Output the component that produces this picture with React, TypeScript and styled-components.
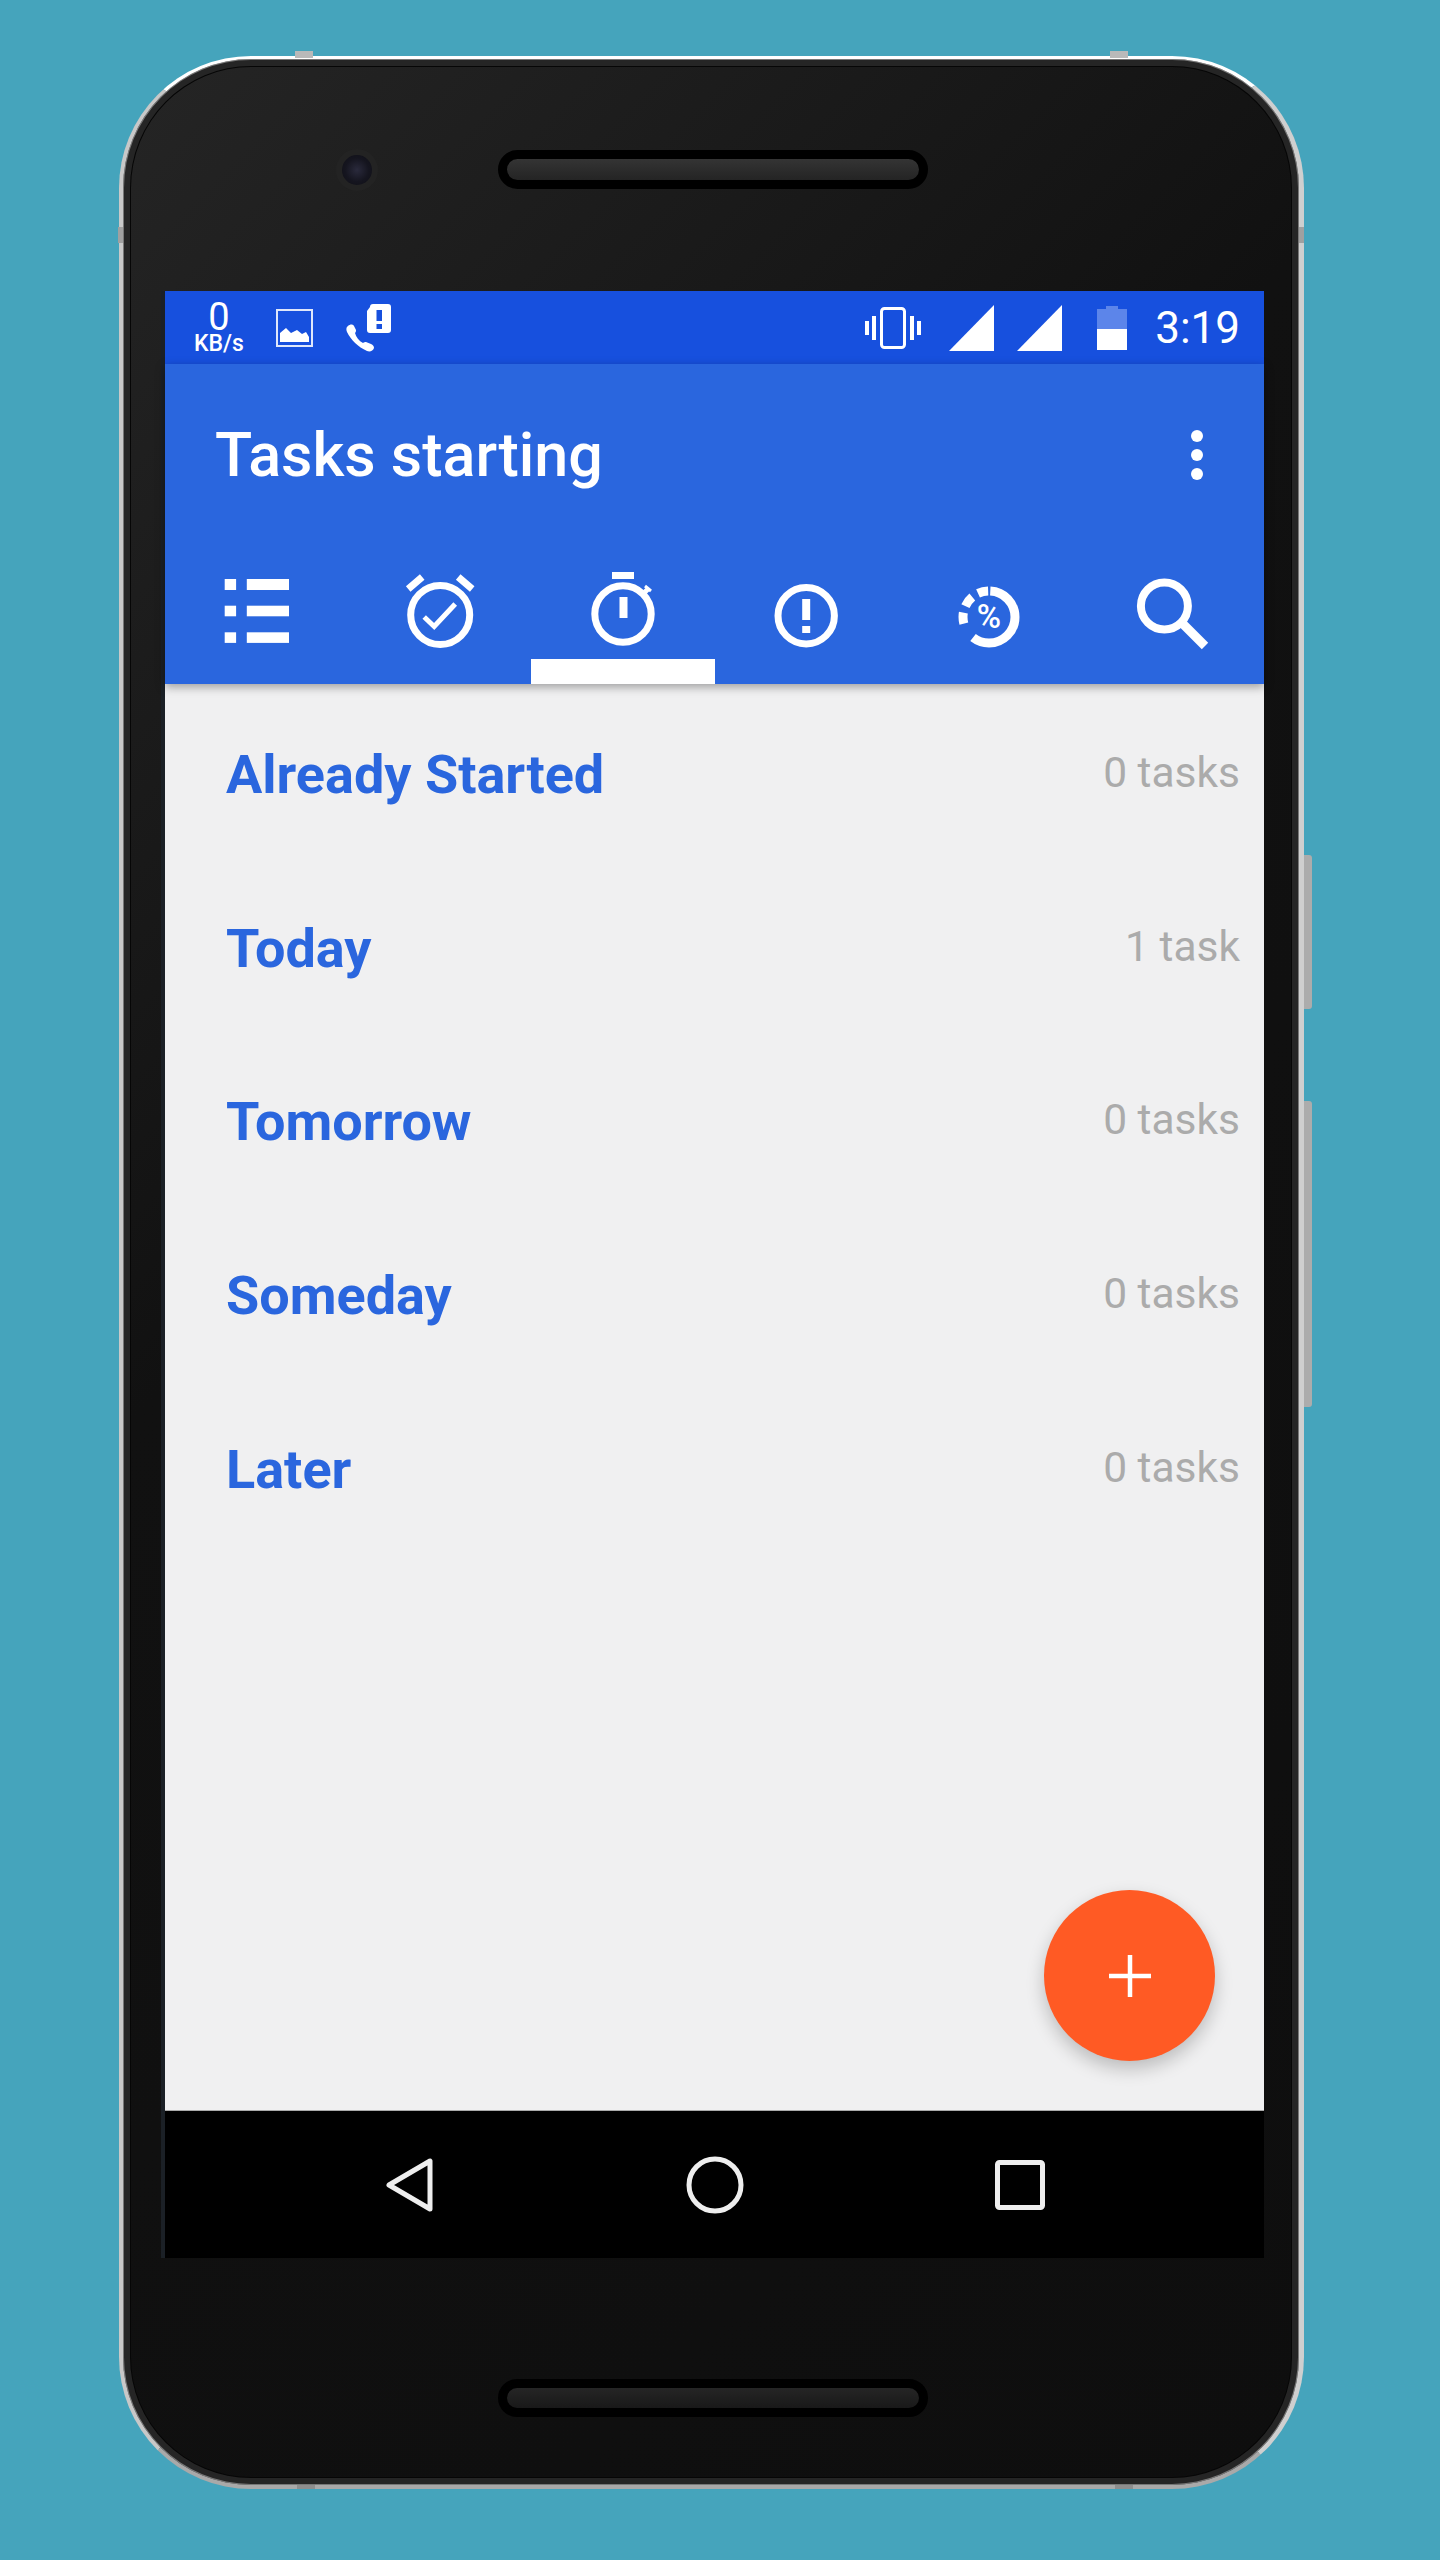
import styled, { createGlobalStyle } from "styled-components";

const GlobalStyle = createGlobalStyle`
  html, body {
    margin: 0;
    padding: 0;
    background: #45a4bc;
  }
  * {
    box-sizing: border-box;
  }
`;

const rows = [
  { name: "Already Started", count: "0 tasks" },
  { name: "Today", count: "1 task" },
  { name: "Tomorrow", count: "0 tasks" },
  { name: "Someday", count: "0 tasks" },
  { name: "Later", count: "0 tasks" },
];

const ListIcon = () => (
  <TabSvg viewBox="0 0 100 100">
    <rect x="17.7" y="7" width="11.4" height="11" />
    <rect x="17.7" y="33.7" width="11.4" height="10.6" />
    <rect x="17.7" y="60.3" width="11.4" height="10.6" />
    <rect x="39.8" y="7" width="42.2" height="11" />
    <rect x="39.8" y="33.7" width="42.2" height="10.6" />
    <rect x="39.8" y="60.3" width="42.2" height="10.6" />
  </TabSvg>
);

const AlarmIcon = () => (
  <TabSvg viewBox="0 0 100 100">
    <g fill="none" stroke="#fff">
      <circle cx="50.2" cy="43" r="29.5" strokeWidth="7" />
      <path d="M18.2 17L32.2 5M68.2 5L82.2 17" strokeWidth="7" />
      <path d="M34.2 45L44.2 54.5L65.2 32" strokeWidth="5" />
    </g>
  </TabSvg>
);

const TimerIcon = () => (
  <TabSvg viewBox="0 0 100 100">
    <circle cx="50" cy="42" r="28.2" fill="none" stroke="#fff" strokeWidth="7" />
    <rect x="39" y="0" width="22" height="7" />
    <rect x="46.5" y="25" width="8" height="21" />
    <path d="M68 24L75 17" stroke="#fff" strokeWidth="5" />
    <path d="M72 14L78 19" stroke="#fff" strokeWidth="3" />
  </TabSvg>
);

const AlertIcon = () => (
  <TabSvg viewBox="0 0 100 100">
    <circle cx="50.2" cy="43.7" r="28.2" fill="none" stroke="#fff" strokeWidth="7" />
    <rect x="46.2" y="27" width="8" height="21" />
    <rect x="46.2" y="54" width="8" height="7" />
  </TabSvg>
);

const PercentIcon = () => (
  <TabSvg viewBox="0 0 100 100">
    <circle
      cx="50"
      cy="45"
      r="26"
      fill="none"
      stroke="#fff"
      strokeWidth="9"
      pathLength={360}
      strokeDasharray="215 37 25 15 25 15 23 5"
      strokeDashoffset="-3"
      transform="rotate(-90 50 45)"
    />
    <PercentText x="50" y="55.5" textAnchor="middle">
      %
    </PercentText>
  </TabSvg>
);

const SearchIcon = () => (
  <TabSvg viewBox="0 0 100 100">
    <circle cx="42.4" cy="34" r="23.5" fill="none" stroke="#fff" strokeWidth="8" />
    <path d="M60 51L83 74" fill="none" stroke="#fff" strokeWidth="9" />
  </TabSvg>
);

const tabs = [
  { key: "all", icon: <ListIcon /> },
  { key: "alarm", icon: <AlarmIcon /> },
  { key: "starting", icon: <TimerIcon />, active: true },
  { key: "due", icon: <AlertIcon /> },
  { key: "progress", icon: <PercentIcon /> },
  { key: "search", icon: <SearchIcon /> },
];

const App = () => {
  return (
    <Page>
      <GlobalStyle />
      <Phone>
        <Nub $side="top" $at={172} />
        <Nub $side="top" $at={987} />
        <Nub $side="bottom" $at={174} />
        <Nub $side="bottom" $at={992} />
        <EdgeNub $side="left" $top={168} />
        <EdgeNub $side="right" $top={168} />
        <SideKey $top={796} $height={154} />
        <SideKey $top={1042} $height={306} />

        <TopBezel>
          <Camera />
          <Speaker />
        </TopBezel>

        <Screen>
          <StatusBar>
            <StatusLeft>
              <NetSpeed>
                <NetValue>0</NetValue>
                <NetUnit>KB/s</NetUnit>
              </NetSpeed>
              <svg width="37" height="38" viewBox="0 0 37 38">
                <rect x="1" y="1" width="35" height="36" fill="none" stroke="#dfe7fb" strokeWidth="2" />
                <path d="M4 33V24L10 19L15 24L21 21L26 25L30 23L33 28V33Z" fill="#fff" />
              </svg>
              <svg width="45" height="48" viewBox="0 0 45 48">
                <path
                  d="M2 22C0 23 0 26 1 28C5 36 12 43 21 47C24 48 27 47 28 44C28 42 27 41 25 40L20 38C19 38 18 38 17 39C13 37 10 33 9 29C10 28 10 27 10 26L8 22C7 20 4 20 2 22Z"
                  fill="#fff"
                />
                <path d="M24 3Q24 0 27 0H42Q45 0 45 3V26Q45 29 42 29H24Q21 29 21 26V7Z" fill="#fff" />
                <rect x="30.5" y="6" width="5.5" height="11" fill="#1750de" />
                <rect x="30.5" y="20" width="5.5" height="5" fill="#1750de" />
              </svg>
            </StatusLeft>
            <StatusRight>
              <svg width="56" height="42" viewBox="0 0 56 42">
                <rect x="16.5" y="1.5" width="23" height="39" rx="3" fill="none" stroke="#fff" strokeWidth="3" />
                <path d="M2 14V28M9 9V33M47 9V33M54 14V28" stroke="#fff" strokeWidth="4" />
              </svg>
              <SignalIcon viewBox="0 0 45 46">
                <path d="M45 0V46H0Z" fill="#fff" />
              </SignalIcon>
              <SecondSignal viewBox="0 0 45 46">
                <path d="M45 0V46H0Z" fill="#fff" />
              </SecondSignal>
              <BatteryIcon viewBox="0 0 30 44">
                <path d="M9 0H21V3H30V23H0V3H9Z" fill="#5c85ea" />
                <rect x="0" y="23" width="30" height="21" fill="#fff" />
              </BatteryIcon>
              <Clock>3:19</Clock>
            </StatusRight>
          </StatusBar>

          <AppBar>
            <TitleRow>
              <Title>Tasks starting</Title>
              <svg width="14" height="52" viewBox="0 0 14 52">
                <circle cx="7" cy="7" r="6" fill="#fff" />
                <circle cx="7" cy="26" r="6" fill="#fff" />
                <circle cx="7" cy="45" r="6" fill="#fff" />
              </svg>
            </TitleRow>
            <TabRow>
              {tabs.map((tab) => (
                <Tab key={tab.key} $active={tab.active}>
                  {tab.icon}
                </Tab>
              ))}
            </TabRow>
          </AppBar>

          <Content>
            <GroupList>
              {rows.map((row) => (
                <GroupRow key={row.name}>
                  <GroupName>{row.name}</GroupName>
                  <GroupCount>{row.count}</GroupCount>
                </GroupRow>
              ))}
            </GroupList>
            <Fab>
              <svg width="42" height="42" viewBox="0 0 42 42">
                <path d="M21 0V42M0 21H42" stroke="#fff" strokeWidth="4.5" />
              </svg>
            </Fab>
          </Content>

          <NavBar>
            <NavButton>
              <svg width="60" height="66" viewBox="0 0 60 66">
                <path d="M50 9V57L9 33Z" fill="none" stroke="#eee" strokeWidth="5" strokeLinejoin="round" />
              </svg>
            </NavButton>
            <NavButton>
              <svg width="60" height="60" viewBox="0 0 60 60">
                <circle cx="30" cy="30" r="26" fill="none" stroke="#eee" strokeWidth="5" />
              </svg>
            </NavButton>
            <NavButton>
              <svg width="52" height="52" viewBox="0 0 52 52">
                <rect x="3.5" y="3.5" width="45" height="45" rx="2" fill="none" stroke="#eee" strokeWidth="5" />
              </svg>
            </NavButton>
          </NavBar>
        </Screen>

        <BottomBezel>
          <BottomSpeaker />
        </BottomBezel>
      </Phone>
    </Page>
  );
};

const Page = styled.div`
  width: 1440px;
  height: 2560px;
  padding: 56px 0 0 119px;
  overflow: hidden;
  background: #45a4bc;
  font-family: Roboto, "Liberation Sans", sans-serif;
`;

const Phone = styled.div`
  position: relative;
  display: flex;
  flex-direction: column;
  width: 1185px;
  height: 2433px;
  padding: 0 36px 0 42px;
  border-style: solid;
  border-width: 3px 5px 4px 4px;
  border-color: #fff #cfcfcf #a9a9a9 #c8c8c8;
  border-radius: 132px;
  background: linear-gradient(135deg, #252525 0%, #111 38%, #0e0e0e 100%);
  box-shadow: inset 0 0 0 1px #777, inset 0 0 0 7px #252525, inset 0 0 0 8px #060606;
`;

const Nub = styled.div<{ $side: "top" | "bottom"; $at: number }>`
  position: absolute;
  left: ${(p) => p.$at}px;
  ${(p) => (p.$side === "top" ? "top: -8px; height: 7px; background: #b9b9b9;" : "bottom: -4px; height: 4px; background: #8e8e8e;")}
  width: 18px;
`;

const EdgeNub = styled.div<{ $side: "left" | "right"; $top: number }>`
  position: absolute;
  top: ${(p) => p.$top}px;
  ${(p) => p.$side}: -5px;
  width: 5px;
  height: 16px;
  background: #a0a0a0;
`;

const SideKey = styled.div<{ $top: number; $height: number }>`
  position: absolute;
  top: ${(p) => p.$top}px;
  right: -13px;
  width: 8px;
  height: ${(p) => p.$height}px;
  border-radius: 0 3px 3px 0;
  background: #acacac;
`;

const TopBezel = styled.div`
  position: relative;
  display: flex;
  justify-content: center;
  flex-shrink: 0;
  height: 232px;
  padding: 91px 2px 0 0;
`;

const Camera = styled.div`
  position: absolute;
  left: 171px;
  top: 90px;
  width: 42px;
  height: 42px;
  border: 6px solid #232323;
  border-radius: 50%;
  background: radial-gradient(circle at 50% 50%, #2a2a3c 0%, #15151f 55%, #0f0f16 100%);
`;

const Speaker = styled.div`
  width: 430px;
  height: 39px;
  border: 9px solid #000;
  border-radius: 20px;
  background: linear-gradient(#343434, #242424);
`;

const Screen = styled.div`
  display: flex;
  flex-direction: column;
  flex-shrink: 0;
  width: 1099px;
  height: 1967px;
  box-shadow: -4px 0 0 #1b2026;
`;

const StatusBar = styled.div`
  display: flex;
  align-items: center;
  justify-content: space-between;
  flex-shrink: 0;
  height: 73px;
  padding: 0 24px 0 30px;
  background: #1750de;
  color: #fff;
`;

const StatusLeft = styled.div`
  display: flex;
  align-items: center;
  gap: 33px;
`;

const NetSpeed = styled.div`
  display: flex;
  flex-direction: column;
  align-items: center;
  width: 48px;
`;

const NetValue = styled.span`
  font-size: 38px;
  line-height: 32px;
`;

const NetUnit = styled.span`
  font-size: 23px;
  font-weight: 500;
  line-height: 22px;
`;

const StatusRight = styled.div`
  display: flex;
  align-items: center;
`;

const SignalIcon = styled.svg`
  width: 45px;
  height: 46px;
  margin-left: 28px;
`;

const SecondSignal = styled(SignalIcon)`
  margin-left: 23px;
`;

const BatteryIcon = styled.svg`
  width: 30px;
  height: 44px;
  margin-left: 35px;
`;

const Clock = styled.span`
  margin-left: 28px;
  font-size: 44px;
  line-height: 50px;
`;

const AppBar = styled.div`
  position: relative;
  z-index: 1;
  flex-shrink: 0;
  height: 320px;
  background: #2a66de;
  box-shadow: 0 3px 9px rgba(0, 0, 0, 0.35);
`;

const TitleRow = styled.div`
  display: flex;
  align-items: center;
  justify-content: space-between;
  height: 196px;
  padding: 0 60px 14px 50px;
`;

const Title = styled.div`
  color: #fff;
  font-size: 61px;
  font-weight: 500;
  line-height: 72px;
`;

const TabRow = styled.div`
  display: grid;
  grid-template-columns: repeat(6, 1fr);
  height: 124px;
`;

const Tab = styled.div<{ $active?: boolean }>`
  display: flex;
  align-items: center;
  justify-content: center;
  box-shadow: ${(p) => (p.$active ? "inset 0 -25px 0 #fff" : "none")};
`;

const TabSvg = styled.svg`
  width: 100px;
  height: 100px;
  fill: #fff;
  overflow: visible;
`;

const PercentText = styled.text`
  fill: #fff;
  font-family: Roboto, "Liberation Sans", sans-serif;
  font-size: 33px;
  font-weight: 500;
`;

const Content = styled.div`
  position: relative;
  flex: 1;
  background: #f0f0f1;
  border-bottom: 1px solid #aaa;
`;

const GroupList = styled.div`
  display: grid;
  grid-auto-rows: 173.7px;
  padding: 4px 24px 0 61px;
`;

const GroupRow = styled.div`
  display: flex;
  align-items: center;
  justify-content: space-between;
`;

const GroupName = styled.span`
  color: #2a66de;
  font-size: 54px;
  font-weight: 700;
  line-height: 64px;
`;

const GroupCount = styled.span`
  margin-top: -4px;
  color: #ababab;
  font-size: 42.5px;
  line-height: 50px;
`;

const Fab = styled.div`
  position: absolute;
  right: 49px;
  bottom: 49px;
  display: flex;
  align-items: center;
  justify-content: center;
  width: 171px;
  height: 171px;
  border-radius: 50%;
  background: #ff5a24;
  box-shadow: 0 8px 18px rgba(0, 0, 0, 0.22);
`;

const NavBar = styled.div`
  display: flex;
  align-items: center;
  justify-content: center;
  flex-shrink: 0;
  height: 147px;
  background: #000;
`;

const NavButton = styled.div`
  display: flex;
  align-items: center;
  justify-content: center;
  width: 305px;
`;

const BottomBezel = styled.div`
  display: flex;
  justify-content: center;
  flex: 1;
  padding: 121px 2px 0 0;
`;

const BottomSpeaker = styled(Speaker)`
  height: 38px;
  background: linear-gradient(#252525, #191919);
`;

export default App;
